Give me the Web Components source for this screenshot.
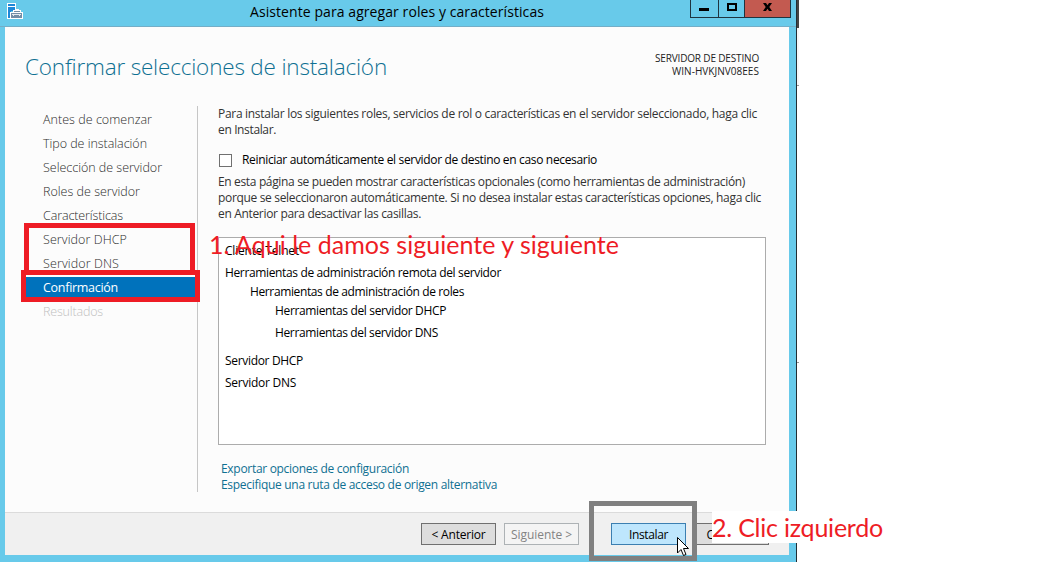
<!DOCTYPE html>
<html lang="es">
<head>
<meta charset="utf-8">
<title>Asistente para agregar roles y características</title>
<style>
html,body{margin:0;height:562px;overflow:hidden;background:#fff}
</style>
</head>
<body>
<wizard-screen></wizard-screen>
<script>
function define(name, html, setup){
  const template = document.createElement('template');
  template.innerHTML = html;
  customElements.define(name, class extends HTMLElement{
    connectedCallback(){
      if(this.shadowRoot) return;
      this.attachShadow({mode:'open'}).append(template.content.cloneNode(true));
      if(setup) setup(this, this.shadowRoot);
    }
  });
}

/* One line of text, tracked so that it fills the width given in "w". */
define('text-line', `<style>
:host{display:block;white-space:pre;width:max-content}
span{display:inline-block}
</style><span><slot></slot></span>`, (host, root) => {
  const span = root.querySelector('span');
  const want = +host.getAttribute('w');
  const n = host.textContent.length;
  if(want) span.style.letterSpacing = ((want - span.getBoundingClientRect().width) / n) + 'px';
});

define('app-icon', `<style>:host{display:block;width:16px;height:16px}svg{display:block}</style>
<svg width="16" height="16" viewBox="0 0 16 16" shape-rendering="crispEdges">
<path d="M0 0H9V8H4V16H0Z" fill="#fff"/><path d="M1 1H8V3H1ZM1 4H8V8H4V9H3V15H1Z" fill="#1e88d8"/>
<path d="M3 9H6V7H8V6H12V7H14V9H16V16H3Z" fill="#fff"/><path d="M4 10H15V15H4Z" fill="#738ea6"/><path d="M7 8H13V9H7Z" fill="#738ea6"/><path d="M5 11H14V12H5ZM6 12H7V13H6ZM12 12H13V13H12Z" fill="#e4ebf0"/>
</svg>`);

define('title-bar', `<style>
:host{display:flex;height:26px;justify-content:space-between;align-items:flex-start;border-bottom:1px solid #74aec7}
app-icon{margin:3px 0 0 7px}
text-line{margin:3px 0 0 0;font-size:14px;line-height:18px;color:#000}
.controls{display:grid;grid-template-columns:27px 25px 45px;column-gap:1px;background:#1e3440;border:1px solid #1e3440;border-top:0;height:17px;margin-right:5px}
.controls i{display:block;background:#68caea}
.controls i:last-child{background:#c35a50}
svg{display:block}
.title{margin-left:227px;flex:1}
</style>
<app-icon></app-icon><div class="title"><text-line w="294">Asistente para agregar roles y características</text-line></div>
<div class="controls"><i><svg width="27" height="17"><path d="M8 8H18V11H8Z"/></svg></i><i><svg width="25" height="17"><path d="M9 4H17V10H9Z" fill="none" stroke="#000" stroke-width="2"/></svg></i><i><svg width="45" height="17"><path d="M18 3H21L22.500 5.200L24 3H27L24.300 7L27 11H24L22.500 8.800L21 11H18L20.700 7Z"/></svg></i></div>`);

define('nav-item', `<style>
:host{display:block;height:22px;margin:0 2px 2px 21px;padding-left:17px;font-size:12.5px;line-height:22px;color:#2c2c2c;font-weight:300}
:host([active]){background:#0072bc;color:#fff;font-weight:400}
:host([disabled]){color:#c0c0c0}
</style><slot></slot>`);

define('step-nav', `<style>
:host{display:block;box-sizing:border-box;width:193px;height:386px;border-right:1px solid #c6c6c6;padding-top:3px}
</style>
<nav-item><text-line w="109">Antes de comenzar</text-line></nav-item>
<nav-item><text-line w="104">Tipo de instalación</text-line></nav-item>
<nav-item><text-line w="119">Selección de servidor</text-line></nav-item>
<nav-item><text-line w="97">Roles de servidor</text-line></nav-item>
<nav-item><text-line w="80">Características</text-line></nav-item>
<nav-item><text-line w="84">Servidor DHCP</text-line></nav-item>
<nav-item><text-line w="76">Servidor DNS</text-line></nav-item>
<nav-item active><text-line w="75">Confirmación</text-line></nav-item>
<nav-item disabled><text-line w="60">Resultados</text-line></nav-item>`);

define('check-box', `<style>
:host{display:flex;align-items:center;height:16px;color:#000}
i{box-sizing:border-box;width:13px;height:13px;border:1px solid #707070;background:#fff;margin:0 10px 0 1px}
</style><i></i><slot></slot>`);

define('feature-list', `<style>
:host{display:block;box-sizing:border-box;width:548px;height:208px;border:1px solid #acacac;background:#fff;padding:5px 6px 0;color:#000}
.row{height:19px;line-height:16px}.row.tall{height:22px}.row.last{height:28px}
.l1{padding-left:25px}.l2{padding-left:50px}
</style>
<div class="row tall"><text-line w="74">Cliente Telnet</text-line></div>
<div class="row"><text-line w="276">Herramientas de administración remota del servidor</text-line></div>
<div class="row l1"><text-line w="214">Herramientas de administración de roles</text-line></div>
<div class="row tall l2"><text-line w="171">Herramientas del servidor DHCP</text-line></div>
<div class="row last l2"><text-line w="163">Herramientas del servidor DNS</text-line></div>
<div class="row tall"><text-line w="78">Servidor DHCP</text-line></div>
<div class="row"><text-line w="71">Servidor DNS</text-line></div>`);

define('confirm-page', `<style>
:host{display:block;margin-left:20px;font-size:12px;line-height:16px;color:#333}
check-box{margin:14px 0 6px}
feature-list{margin:15px 0 16px}
.links{color:#0f7092;padding-left:3px}
</style>
<text-line w="539">Para instalar los siguientes roles, servicios de rol o características en el servidor seleccionado, haga clic</text-line>
<text-line w="58">en Instalar.</text-line>
<check-box><text-line w="355">Reiniciar automáticamente el servidor de destino en caso necesario</text-line></check-box>
<text-line w="527">En esta página se pueden mostrar características opcionales (como herramientas de administración)</text-line>
<text-line w="543">porque se seleccionaron automáticamente. Si no desea instalar estas características opciones, haga clic</text-line>
<text-line w="203">en Anterior para desactivar las casillas.</text-line>
<feature-list></feature-list>
<div class="links"><text-line w="188">Exportar opciones de configuración</text-line>
<text-line w="276">Especifique una ruta de acceso de origen alternativa</text-line></div>`);

define('wizard-button', `<style>
:host{display:flex;box-sizing:border-box;width:75px;height:22px;border:1px solid #707070;background:#ddd;justify-content:center;padding-top:3px;font-size:12px;line-height:16px;color:#000}
:host([disabled]){background:#f4f4f4;border-color:#adb2b5;color:#838383}
:host([primary]){background:#bee6fd;border-color:#3c7fb1}
</style><slot></slot>`);

define('wizard-footer', `<style>
:host{display:flex;box-sizing:border-box;height:43px;border-top:1px solid #dbdbdb;background:#f0f0f0;padding:10px 20px 0 416px}
.next{margin-left:8px}.install{margin-left:32px}.cancel{margin-left:8px}
</style>
<wizard-button><text-line w="54">&lt; Anterior</text-line></wizard-button>
<wizard-button class="next" disabled><text-line w="61">Siguiente &gt;</text-line></wizard-button>
<wizard-button class="install" primary><text-line w="39">Instalar</text-line></wizard-button>
<wizard-button class="cancel"><text-line w="50">Cancelar</text-line></wizard-button>`);

define('wizard-window', `<style>
:host{display:block;box-sizing:border-box;width:797px;height:562px;background:#68caea;border-right:1px solid #222d33;font-family:"Open Sans","Noto Sans",sans-serif}
.client{margin-left:5px;width:784px;height:528px;background:#fcfcfc;display:flex;flex-direction:column}
header{display:flex;justify-content:space-between;height:79px}
.heading{margin:23px 0 0 20px;font-size:22.5px;line-height:34px;font-weight:300;color:#0f7092}
.server{margin:25px 30px 0 0;font-size:10px;line-height:13px;color:#222;display:flex;flex-direction:column;align-items:flex-end}
main{display:flex;flex:1}
</style>
<title-bar></title-bar>
<div class="client">
<header><text-line class="heading" w="362">Confirmar selecciones de instalación</text-line>
<div class="server"><text-line w="104">SERVIDOR DE DESTINO</text-line><text-line w="87">WIN-HVKJNV08EES</text-line></div></header>
<main><step-nav></step-nav><confirm-page></confirm-page></main>
<wizard-footer></wizard-footer>
</div>`);

/* Hand-made marks laid over the window. */
define('mark-layer', `<style>
:host{position:absolute;inset:0;font-family:Lato,"Open Sans",sans-serif;font-size:25px;line-height:32px;color:#ee1c25}
.box{position:absolute;box-sizing:border-box;border:5px solid #ee1c25}
.a{left:24px;top:223px;width:171px;height:52px}
.b{left:21px;top:270px;width:179px;height:32px}
.c{left:589px;top:501px;width:108px;height:60px;border-color:#808080}
.one{position:absolute;left:209px;top:228px}
.two{position:absolute;left:712px;top:511px;width:172px;height:32px;background:#fff}
svg{position:absolute;left:677px;top:537px}
</style>
<div class="box a"></div><div class="box b"></div><div class="box c"></div>
<text-line class="one" w="410">1. Aqui le damos siguiente y siguiente</text-line>
<div class="two"><text-line w="171">2. Clic izquierdo</text-line></div>
<svg width="13" height="20" viewBox="0 0 13 20"><path d="M.5.5V16L4 12.500L6.500 18.500L9 17.500L6.500 11.500H11.500Z" fill="#fff" stroke="#000"/></svg>`);

define('wizard-screen', `<style>
:host{display:flex;position:relative;width:1044px;height:562px;background:#fff;overflow:hidden}
.edge{width:2px;height:562px;display:grid;grid-template-rows:28px 57px 1px 276px 1px 1fr}
.edge i:nth-child(1){background:#444}
.edge i:nth-child(2){background:#f7f7f7}
.edge i:nth-child(3),.edge i:nth-child(5){background:#999}
</style>
<wizard-window></wizard-window><div class="edge"><i></i><i></i><i></i><i></i><i></i><i></i></div><mark-layer></mark-layer>`);
</script>
</body>
</html>
